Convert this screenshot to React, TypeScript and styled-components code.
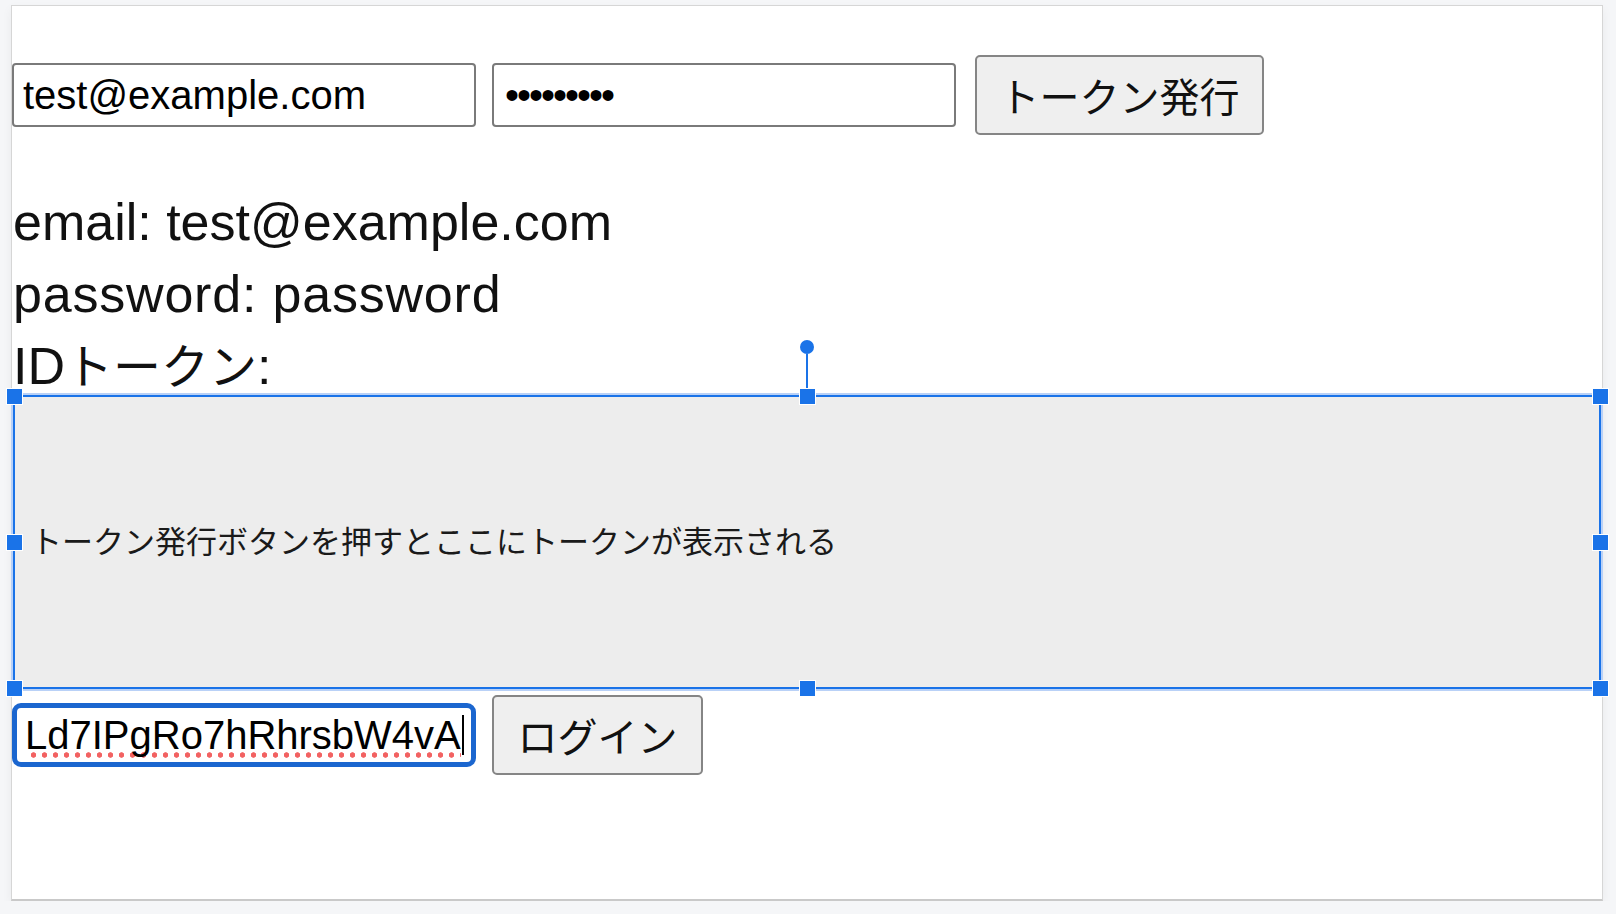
import styled, { createGlobalStyle } from "styled-components";

const GlobalStyle = createGlobalStyle`
  body {
    margin: 0;
    background: #f5f6f8;
    font-family: "Liberation Sans", "Noto Sans CJK JP", sans-serif;
  }
`;

const Frame = styled.div`
  margin: 5px 0 0 11px;
  width: 1592px;
  height: 896px;
  box-sizing: border-box;
  background: #fff;
  border: 1px solid #d6d6d6;
  border-bottom: 2px solid #c9c9c9;
  box-shadow: 0 4px 10px rgba(0, 0, 0, 0.05);
  padding-top: 49px;
`;

const Row = styled.div<{ $gap?: number }>`
  display: flex;
  align-items: center;
  gap: ${(p) => p.$gap ?? 16}px;
  height: 80px;
`;

const TextInput = styled.input`
  width: 464px;
  height: 64px;
  box-sizing: border-box;
  border: 2px solid #7a7a7a;
  border-radius: 4px;
  padding: 0 9px;
  font: 40px "Liberation Sans", sans-serif;
  color: #000;
  background: #fff;
  outline: none;

  &[type="password"] {
    letter-spacing: -2px;
    padding-left: 11px;
  }
`;

const Button = styled.button<{ $width: number }>`
  width: ${(p) => p.$width}px;
  height: 80px;
  box-sizing: border-box;
  border: 2px solid #858585;
  border-radius: 5px;
  background: #efefef;
  color: #111;
  font: 40px "Noto Sans CJK JP", sans-serif;
  padding: 0;
  margin-left: ${(p) => (p.$width > 250 ? 3 : 0)}px;
`;

const Info = styled.div`
  margin: 51px 0 -7px 1px;
  font-size: 52px;
  line-height: 72px;
  color: #111;
`;

const InfoLine = styled.div<{ $spacing?: number }>`
  letter-spacing: ${(p) => p.$spacing ?? 0}px;
`;

const Ja = styled.span`
  font-family: "Noto Sans CJK JP", sans-serif;
  font-size: 48px;
  line-height: 1;
`;

const TokenWrap = styled.div`
  position: relative;
  margin-left: 1px;
  width: 1588px;
`;

const TokenBox = styled.div`
  height: 294px;
  box-sizing: border-box;
  background: #ededed;
  border: 1px solid #707070;
  display: flex;
  align-items: center;
  padding: 0 0 6px 17px;
  font: 31px "Noto Sans CJK JP", sans-serif;
  color: #1a1a1a;
`;

const Selection = styled.div`
  position: absolute;
  inset: 0;
  border: 2px solid #1a73e8;
  box-shadow: 0 0 0 2px #b9d1f7;
  pointer-events: none;
`;

const Handle = styled.div<{ $x: number; $y: number }>`
  position: absolute;
  width: 17px;
  height: 17px;
  box-sizing: border-box;
  background: #1a73e8;
  border: 1px solid #fff;
  left: calc(${(p) => p.$x}% + ${(p) => 1 - p.$x / 50}px - 8.5px);
  top: calc(${(p) => p.$y}% + ${(p) => 1 - p.$y / 50}px - 8.5px);
`;

const Knob = styled.div`
  position: absolute;
  left: 50%;
  top: -55px;
  transform: translateX(-50%);
  display: flex;
  flex-direction: column;
  align-items: center;
`;

const KnobDot = styled.div`
  width: 14px;
  height: 14px;
  border-radius: 50%;
  background: #1a73e8;
`;

const KnobStem = styled.div`
  width: 2px;
  height: 34px;
  background: #1a73e8;
`;

const BottomRow = styled(Row)`
  margin-top: 6px;
`;

const FocusedField = styled.div`
  width: 464px;
  height: 64px;
  box-sizing: border-box;
  border: 5px solid #1b66cf;
  border-radius: 9px;
  padding-left: 8px;
  display: flex;
  align-items: center;
  overflow: hidden;
  font: 40px "Liberation Sans", sans-serif;
  color: #000;
  background: #fff;
`;

const Misspelled = styled.span`
  white-space: nowrap;
  background-image: radial-gradient(circle, #f26262 2.4px, transparent 3px);
  background-repeat: repeat-x;
  background-size: 11px 6px;
  background-position: 3px 100%;
`;

const Caret = styled.span`
  display: inline-block;
  width: 2px;
  height: 40px;
  margin-left: 1px;
  background: #000;
`;

const handles: [number, number][] = [
  [0, 0],
  [50, 0],
  [100, 0],
  [0, 50],
  [100, 50],
  [0, 100],
  [50, 100],
  [100, 100],
];

export default function App() {
  return (
    <>
      <GlobalStyle />
      <Frame>
        <Row>
          <TextInput type="email" defaultValue="test@example.com" readOnly />
          <TextInput type="password" defaultValue="password1" readOnly />
          <Button $width={289}>トークン発行</Button>
        </Row>
        <Info>
          <InfoLine>email: test@example.com</InfoLine>
          <InfoLine $spacing={0.8}>password: password</InfoLine>
          <InfoLine>
            ID<Ja>トークン</Ja>:
          </InfoLine>
        </Info>
        <TokenWrap>
          <TokenBox>トークン発行ボタンを押すとここにトークンが表示される</TokenBox>
          <Selection />
          <Knob>
            <KnobDot />
            <KnobStem />
          </Knob>
          {handles.map(([x, y]) => (
            <Handle key={`${x}-${y}`} $x={x} $y={y} />
          ))}
        </TokenWrap>
        <BottomRow>
          <FocusedField>
            <Misspelled>Ld7IPgRo7hRhrsbW4vA</Misspelled>
            <Caret />
          </FocusedField>
          <Button $width={211}>ログイン</Button>
        </BottomRow>
      </Frame>
    </>
  );
}
